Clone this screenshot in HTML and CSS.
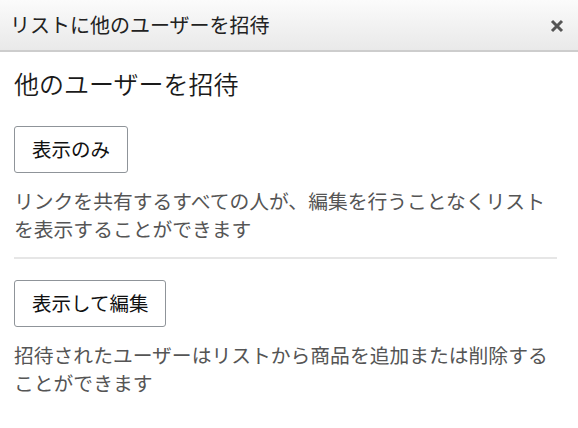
FILE: index.html
```html
<!DOCTYPE html>
<html>
<head>
    <title>リストに他のユーザーを招待</title>
    <link rel="stylesheet" href="styles.css">
</head>
<body>
    <div class="header">
        <span class="header-title">リストに他のユーザーを招待</span>
        <span class="close">
            <svg width="14" height="14" viewBox="0 0 14 14">
                <path d="M2 2 L12 12 M12 2 L2 12" stroke="#555" stroke-width="3"/>
            </svg>
        </span>
    </div>
    <div class="content">
        <h1>他のユーザーを招待</h1>

        <div class="option">
            <button type="button">表示のみ</button>
            <p class="desc">リンクを共有するすべての人が、編集を行うことなくリストを表示することができます</p>
        </div>

        <hr class="divider">

        <div class="option">
            <button type="button">表示して編集</button>
            <p class="desc">招待されたユーザーはリストから商品を追加または削除することができます</p>
        </div>
    </div>
</body>
</html>
```

FILE: styles.css
```css
body {
    margin: 0;
    font-family: "Noto Sans CJK JP", "Liberation Sans", sans-serif;
    background: #fff;
    color: #222;
}
.header {
    height: 50px;
    display: flex;
    align-items: center;
    justify-content: space-between;
    padding: 0 14px 0 10px;
    background: linear-gradient(#fbfbfb, #e9e9e9);
    border-bottom: 2px solid #cdcdcd;
}
.header-title {
    font-size: 20px;
    line-height: 24px;
    color: #222;
}
.close {
    display: flex;
    margin-top: 1px;
    cursor: pointer;
}
.content {
    padding: 15px 21px 0 14px;
}
h1 {
    margin: 0;
    font-size: 25px;
    font-weight: 350;
    line-height: 32px;
    color: #1a1a1a;
}
.option button {
    display: block;
    background: #fff;
    color: #111;
    font-family: inherit;
    font-size: 19.5px;
    line-height: 24px;
    padding: 10px 17px 11px 17px;
    border: 1px solid #8f9499;
    border-radius: 3px;
    cursor: pointer;
}
h1 + .option {
    margin-top: 27px;
}
.desc {
    margin: 14px 0 0 0;
    font-size: 19.8px;
    line-height: 28px;
    color: #555;
}
.divider {
    border: none;
    border-top: 2px solid #e6e6e6;
    margin: 14px 0 21px 0;
}
```
